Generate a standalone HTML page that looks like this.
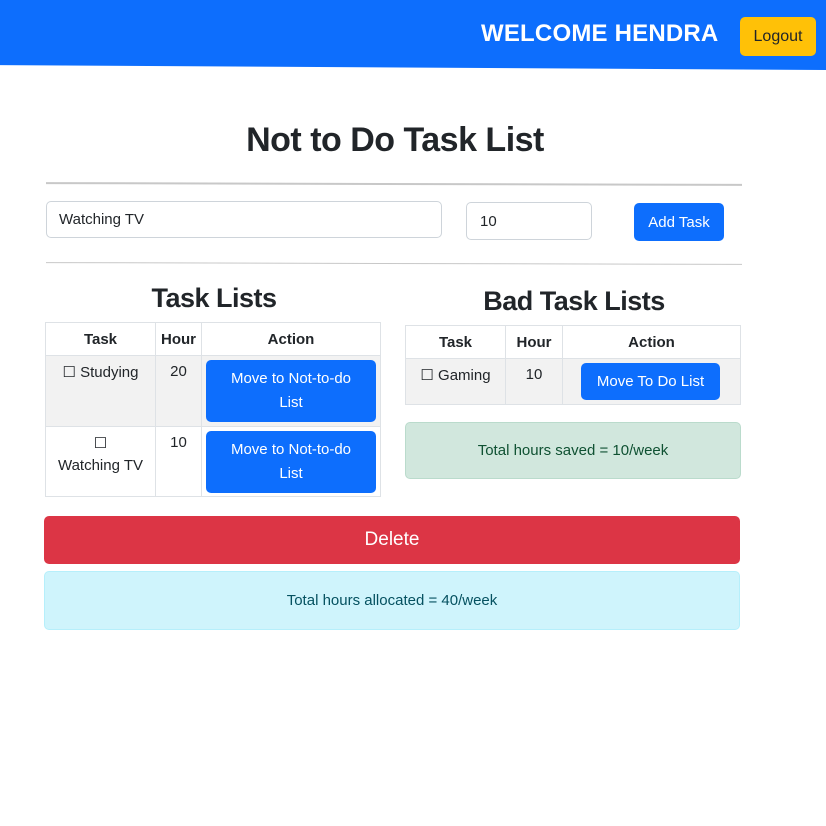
<!DOCTYPE html>
<html><head><meta charset="utf-8"><style>
*{box-sizing:border-box;margin:0;padding:0}
body{width:826px;height:826px;background:#fff;font-family:"Liberation Sans",sans-serif;color:#212529;position:relative;overflow:hidden}
.a{position:absolute}
.c{display:flex;align-items:center;justify-content:center;text-align:center}
.btn{background:#0d6efd;color:#fff;border-radius:5px;font-size:15px;line-height:23px}
.cell{position:absolute;border:1px solid #dee2e6;font-size:15px;text-align:center}
.th{font-weight:bold;display:flex;align-items:center;justify-content:center}
</style></head><body>
<div class="a" style="left:0;top:0;width:826px;height:70px;background:#0d6efd;clip-path:polygon(0 0,100% 0,100% 100%,0 93%)"></div>
<div class="a" style="left:481px;top:20px;color:#fff;font-weight:bold;font-size:24px;white-space:nowrap;letter-spacing:0.2px">WELCOME HENDRA</div>
<div class="a c" style="left:740px;top:17px;width:76px;height:39px;background:#ffc107;border-radius:5px;font-size:16px;color:#212529">Logout</div>

<div class="a" style="left:0;width:790px;top:121px;text-align:center;font-size:34px;font-weight:bold;letter-spacing:-0.5px">Not to Do Task List</div>
<div class="a" style="left:46px;top:183px;width:696px;height:2px;background:#c8c8c8;transform:rotate(0.15deg)"></div>
<div class="a" style="left:46px;top:201px;width:396px;height:37px;border:1px solid #ced4da;border-radius:5px;font-size:15px;padding:9px 12px">Watching TV</div>
<div class="a" style="left:466px;top:202px;width:126px;height:38px;border:1px solid #ced4da;border-radius:5px;font-size:15px;padding:10px 13px">10</div>
<div class="a c btn" style="left:634px;top:203px;width:90px;height:38px">Add Task</div>
<div class="a" style="left:46px;top:263px;width:696px;height:1px;background:#c8c8c8;transform:rotate(0.15deg)"></div>

<div class="a" style="left:45px;width:338px;top:283px;text-align:center;font-size:27px;font-weight:bold;letter-spacing:-0.5px">Task Lists</div>
<div class="a" style="left:405px;width:338px;top:286px;text-align:center;font-size:27px;font-weight:bold;letter-spacing:-0.5px">Bad Task Lists</div>

<div class="a" style="left:45px;top:355px;width:336px;height:71px;background:#f2f2f2"></div>
<div class="cell th" style="left:45px;top:322px;width:111px;height:34px">Task</div>
<div class="cell th" style="left:155px;top:322px;width:47px;height:34px">Hour</div>
<div class="cell th" style="left:201px;top:322px;width:180px;height:34px">Action</div>
<div class="cell" style="left:45px;top:355px;width:111px;height:72px;padding-top:7px">☐ Studying</div>
<div class="cell" style="left:155px;top:355px;width:47px;height:72px;padding-top:7px">20</div>
<div class="cell" style="left:201px;top:355px;width:180px;height:72px"></div>
<div class="cell" style="left:45px;top:426px;width:111px;height:71px;padding-top:6px;line-height:22px">☐<br>Watching TV</div>
<div class="cell" style="left:155px;top:426px;width:47px;height:71px;padding-top:7px">10</div>
<div class="cell" style="left:201px;top:426px;width:180px;height:71px"></div>
<div class="a c btn" style="left:206px;top:360px;width:170px;height:62px;line-height:24px">Move to Not-to-do<br>List</div>
<div class="a c btn" style="left:206px;top:431px;width:170px;height:62px;line-height:24px">Move to Not-to-do<br>List</div>

<div class="a" style="left:405px;top:358px;width:336px;height:47px;background:#f2f2f2"></div>
<div class="cell th" style="left:405px;top:325px;width:101px;height:34px">Task</div>
<div class="cell th" style="left:505px;top:325px;width:58px;height:34px">Hour</div>
<div class="cell th" style="left:562px;top:325px;width:179px;height:34px">Action</div>
<div class="cell" style="left:405px;top:358px;width:101px;height:47px;padding-top:7px">☐ Gaming</div>
<div class="cell" style="left:505px;top:358px;width:58px;height:47px;padding-top:7px">10</div>
<div class="cell" style="left:562px;top:358px;width:179px;height:47px"></div>
<div class="a c btn" style="left:581px;top:363px;width:139px;height:37px">Move To Do List</div>

<div class="a c" style="left:405px;top:422px;width:336px;height:57px;background:#d1e7dd;border:1px solid #badbcc;border-radius:5px;color:#0f5132;font-size:15px">Total hours saved = 10/week</div>
<div class="a c" style="left:44px;top:516px;width:696px;height:48px;background:#dc3545;border-radius:5px;color:#fff;font-size:19px">Delete</div>
<div class="a c" style="left:44px;top:571px;width:696px;height:59px;background:#cff4fc;border:1px solid #b6effb;border-radius:5px;color:#055160;font-size:15px">Total hours allocated = 40/week</div>
</body></html>
